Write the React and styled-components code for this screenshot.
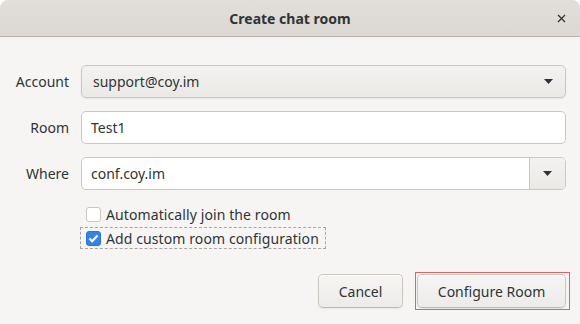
import React from "react";
import styled, { createGlobalStyle } from "styled-components";

const GlobalStyle = createGlobalStyle`
    html, body {
        margin: 0;
        padding: 0;
        background: #ffffff;
    }
    body {
        font-family: "Noto Sans", "Open Sans", sans-serif;
        font-size: 14px;
        color: #2e3436;
    }
`;

const Window = styled.div`
    width: 580px;
    height: 324px;
    background-color: #f6f5f4;
    border-radius: 8px 8px 0 0;
    overflow: hidden;
    display: flex;
    flex-direction: column;
`;

const HeaderBar = styled.div`
    position: relative;
    height: 36px;
    flex-shrink: 0;
    background: linear-gradient(to bottom, #e1deda, #dcd8d4);
    border-bottom: 1px solid #b9b2ab;
    display: flex;
    align-items: center;
    justify-content: center;
`;

const Title = styled.div`
    font-weight: 700;
    font-size: 14px;
    color: #2e3436;
`;

const CloseButton = styled.div`
    position: absolute;
    right: 13px;
    top: 12px;
    width: 12px;
    height: 12px;
    display: flex;
    align-items: center;
    justify-content: center;
`;

const Body = styled.div`
    flex: 1;
    display: flex;
    flex-direction: column;
    padding: 28px 14px 0 0;
`;

const Form = styled.div`
    display: grid;
    grid-template-columns: 69px 1fr;
    column-gap: 12px;
    row-gap: 13px;
    align-items: center;
`;

const Label = styled.div`
    text-align: right;
    color: #2e3436;
`;

const Field = styled.div`
    height: 33px;
    box-sizing: border-box;
    border: 1px solid #cdc7c2;
    border-radius: 5px;
    display: flex;
    align-items: stretch;
    overflow: hidden;
    background: ${p => (p.$combo ? "linear-gradient(to bottom, #f3f2f0, #ebe9e6)" : "#ffffff")};
    box-shadow: ${p => (p.$combo ? "0 1px 2px rgba(0,0,0,0.07)" : "none")};
`;

const FieldText = styled.div`
    flex: 1;
    display: flex;
    align-items: center;
    padding-left: ${p => (p.$combo ? "11px" : "9px")};
`;

const ArrowCell = styled.div`
    width: ${p => (p.$attached ? "35px" : "34px")};
    display: flex;
    align-items: center;
    justify-content: center;
    border-left: ${p => (p.$attached ? "1px solid #cdc7c2" : "none")};
    background: ${p => (p.$attached ? "linear-gradient(to bottom, #f3f2f0, #ebe9e6)" : "transparent")};
`;

const Checks = styled.div`
    grid-column: 2;
    display: flex;
    flex-direction: column;
    align-items: flex-start;
    gap: 2px;
`;

const CheckRow = styled.div`
    height: 22px;
    box-sizing: border-box;
    display: flex;
    align-items: center;
    gap: 5px;
    padding: 0 6px 0 4px;
    margin-left: ${p => (p.$focused ? "-1px" : "0")};
    padding-left: ${p => (p.$focused ? "5px" : "4px")};
    border: 1px dashed ${p => (p.$focused ? "#a9a6a2" : "transparent")};
    letter-spacing: 0.1px;
`;

const Box = styled.div`
    width: 15px;
    height: 15px;
    box-sizing: border-box;
    border-radius: 3px;
    border: 1px solid ${p => (p.$checked ? "#2a76d8" : "#cdc7c2")};
    background: ${p => (p.$checked ? "#3584e4" : "#ffffff")};
    display: flex;
    align-items: center;
    justify-content: center;
`;

const Actions = styled.div`
    display: flex;
    justify-content: flex-end;
    gap: 14px;
    margin-top: 25px;
`;

const ButtonWrap = styled.div`
    position: relative;
`;

const DefaultRing = styled.div`
    position: absolute;
    left: -2px;
    right: -4px;
    top: -2px;
    bottom: -2px;
    border: 1px solid #e26264;
    pointer-events: none;
`;

const Button = styled.button`
    height: 34px;
    width: ${p => p.$width}px;
    box-sizing: border-box;
    border: 1px solid #cdc7c2;
    border-bottom-color: #bfb8b1;
    border-radius: 5px;
    background: linear-gradient(to bottom, #f6f5f4, #edebe9);
    box-shadow: inset 0 1px #ffffff, 0 1px 2px rgba(0,0,0,0.07);
    font-family: inherit;
    font-size: 14px;
    color: #2e3436;
    padding: 0;
`;

const Arrow = () => (
    <svg width="9" height="5" viewBox="0 0 9 5">
        <path d="M0 0 H9 L4.5 5 Z" fill="#2e3436" />
    </svg>
);

const App = () => {
    return (
        <>
            <GlobalStyle />
            <Window>
                <HeaderBar>
                    <Title>Create chat room</Title>
                    <CloseButton>
                        <svg width="9" height="9" viewBox="0 0 9 9">
                            <path d="M1 1 L8 8 M8 1 L1 8" stroke="#2e3436" strokeWidth="1.3" />
                        </svg>
                    </CloseButton>
                </HeaderBar>
                <Body>
                    <Form>
                        <Label>Account</Label>
                        <Field $combo>
                            <FieldText $combo>support@coy.im</FieldText>
                            <ArrowCell><Arrow /></ArrowCell>
                        </Field>

                        <Label>Room</Label>
                        <Field>
                            <FieldText>Test1</FieldText>
                        </Field>

                        <Label>Where</Label>
                        <Field>
                            <FieldText>conf.coy.im</FieldText>
                            <ArrowCell $attached><Arrow /></ArrowCell>
                        </Field>

                        <Checks>
                            <CheckRow>
                                <Box />
                                Automatically join the room
                            </CheckRow>
                            <CheckRow $focused>
                                <Box $checked>
                                    <svg width="11" height="9" viewBox="0 0 11 9">
                                        <path d="M1.5 4.5 L4.2 7.2 L9.5 1.5" stroke="#ffffff" strokeWidth="2.2" fill="none" />
                                    </svg>
                                </Box>
                                Add custom room configuration
                            </CheckRow>
                        </Checks>
                    </Form>
                    <Actions>
                        <Button $width={85}>Cancel</Button>
                        <ButtonWrap>
                            <DefaultRing />
                            <Button $width={149}>Configure Room</Button>
                        </ButtonWrap>
                    </Actions>
                </Body>
            </Window>
        </>
    );
};

export default App;
